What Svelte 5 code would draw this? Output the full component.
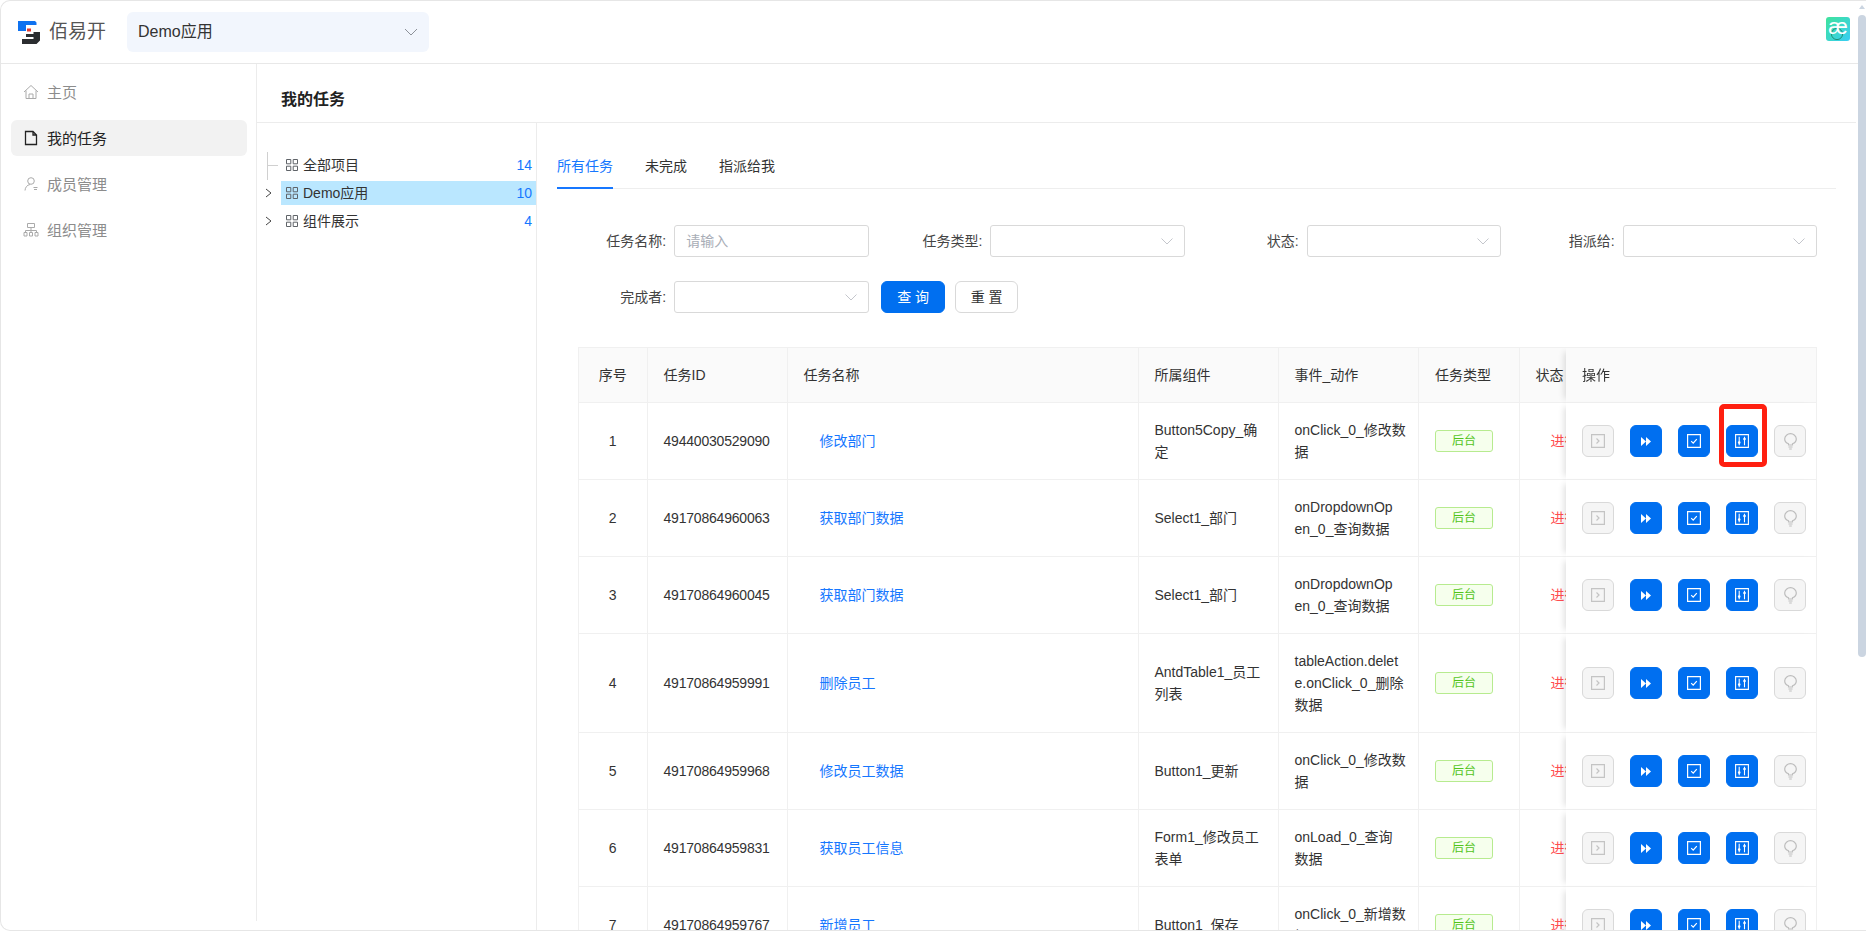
<script>
	const nav = [
		{ label: '主页', icon: 'home' },
		{ label: '我的任务', icon: 'file', active: true },
		{ label: '成员管理', icon: 'user' },
		{ label: '组织管理', icon: 'org' }
	];

	const tree = [
		{ label: '全部项目', count: 14, leaf: true },
		{ label: 'Demo应用', count: 10, selected: true },
		{ label: '组件展示', count: 4 }
	];

	const tabs = ['所有任务', '未完成', '指派给我'];

	// line breaks follow the narrow columns of the table
	const rows = [
		{ id: '49440030529090', name: '修改部门', comp: 'Button5Copy_确\n定', action: 'onClick_0_修改数\n据' },
		{ id: '49170864960063', name: '获取部门数据', comp: 'Select1_部门', action: 'onDropdownOp\nen_0_查询数据' },
		{ id: '49170864960045', name: '获取部门数据', comp: 'Select1_部门', action: 'onDropdownOp\nen_0_查询数据' },
		{ id: '49170864959991', name: '删除员工', comp: 'AntdTable1_员工\n列表', action: 'tableAction.delet\ne.onClick_0_删除\n数据' },
		{ id: '49170864959968', name: '修改员工数据', comp: 'Button1_更新', action: 'onClick_0_修改数\n据' },
		{ id: '49170864959831', name: '获取员工信息', comp: 'Form1_修改员工\n表单', action: 'onLoad_0_查询\n数据' },
		{ id: '49170864959767', name: '新增员工', comp: 'Button1_保存', action: 'onClick_0_新增数\n据' }
	];
</script>

<div class="frame">
	<header class="topbar">
		<div class="brand">
			<svg class="logo" width="22" height="23" viewBox="0 0 22 23">
				<path d="M0 0h17l1.500 1.500V4H8v6H0z" fill="#0f72f0" />
				<path d="M9 7.500h4v3H9z" fill="#e0392f" />
				<path d="M8 13h8v3H8z" fill="#2b2d30" />
				<path d="M15.500 11H22v8.500L18.500 23H4v-5h11.500z" fill="#2b2d30" />
			</svg>
			<span>佰易开</span>
		</div>
		<div class="app-select">
			<span>Demo应用</span>
			<svg width="14" height="8" viewBox="0 0 14 8"><path d="M1 1l6 6 6-6" fill="none" stroke="#8d9199" /></svg>
		</div>
		<div class="avatar">
			<svg width="24" height="24" viewBox="0 0 24 24">
				<circle cx="11" cy="17" r="5.600" fill="none" stroke="#1f8f78" stroke-width="1" />
			</svg>
			<span>æ</span>
		</div>
	</header>

	<div class="body">
		<aside class="sidebar">
			{#each nav as item}
				<div class="nav-item" class:active={item.active}>
					<svg width="16" height="16" viewBox="0 0 16 16" fill="none" stroke="currentColor">
						{#if item.icon === 'home'}
							<path d="M1 8l7-6.500L15 8M3 6.500v8h10v-8M6 14.500V10h4v4.500" />
						{:else if item.icon === 'file'}
							<path d="M2.500 1.500h7.500l3.500 3.500v9.500h-11zM10 1.500V5h3.500" stroke-width="1.300" />
						{:else if item.icon === 'user'}
							<circle cx="8" cy="5" r="3.300" />
							<path d="M2 14.500c.2-3 2-5.500 5-6M10.500 11.500h4M11 13.500h3" />
						{:else}
							<path d="M4.500 1.500h7v4h-7zM8 5.500v5M2.500 10.500v-2h11v2M1 10.500h3v3.500H1zM6.500 10.500h3v3.500h-3zM12 10.500h3v3.500h-3z" />
						{/if}
					</svg>
					<span>{item.label}</span>
				</div>
			{/each}
		</aside>

		<main class="main">
			<h1 class="title">我的任务</h1>
			<div class="split">
				<section class="tree">
					{#each tree as node}
						<div class="tree-row">
							<span class="switcher">
								{#if node.leaf}
									<i class="leaf-line"></i>
								{:else}
									<svg width="8" height="10" viewBox="0 0 8 10"><path d="M1 1l5 4-5 4" fill="none" stroke="#444" /></svg>
								{/if}
							</span>
							<div class="tree-node" class:selected={node.selected}>
								<svg width="12" height="12" viewBox="0 0 12 12" fill="none" stroke="#5f6368">
									<path d="M.5.500h4.300v4.300H.5zM7.200.500h4.300v4.300H7.200zM.5 7.200h4.300v4.300H.5zM7.200 7.200h4.300v4.300H7.200z" />
								</svg>
								<span class="tree-label">{node.label}</span>
								<span class="tree-count">{node.count}</span>
							</div>
						</div>
					{/each}
				</section>

				<section class="content">
					<nav class="tabs">
						{#each tabs as tab, i}
							<span class="tab" class:on={i === 0}>{tab}</span>
						{/each}
					</nav>

					<div class="filters">
						<div class="field">
							<label>任务名称:</label>
							<div class="control"><span class="placeholder">请输入</span></div>
						</div>
						{#each ['任务类型', '状态', '指派给', '完成者'] as f}
							<div class="field">
								<label>{f}:</label>
								<div class="control">
									<svg width="12" height="7" viewBox="0 0 12 7"><path d="M.5.500L6 6 11.500.500" fill="none" stroke="#c4c6cc" /></svg>
								</div>
							</div>
						{/each}
						<div class="form-btns">
							<button class="primary">查 询</button>
							<button>重 置</button>
						</div>
					</div>

					<div class="table-wrap">
						<table>
							<colgroup>
								<col style="width:68.500px" />
								<col style="width:140px" />
								<col style="width:351px" />
								<col style="width:140px" />
								<col style="width:140.500px" />
								<col style="width:100.500px" />
								<col style="width:104px" />
								<col style="width:251px" />
							</colgroup>
							<thead>
								<tr>
									<th class="center">序号</th>
									<th>任务ID</th>
									<th>任务名称</th>
									<th>所属组件</th>
									<th>事件_动作</th>
									<th>任务类型</th>
									<th>状态</th>
									<th class="fixed">操作</th>
								</tr>
							</thead>
							<tbody>
								{#each rows as row, i}
									<tr>
										<td class="center">{i + 1}</td>
										<td class="num">{row.id}</td>
										<td class="name"><span>{row.name}</span></td>
										<td class="lines">{row.comp}</td>
										<td class="lines">{row.action}</td>
										<td><span class="tag">后台</span></td>
										<td class="status">进行中</td>
										<td class="fixed">
											<div class="ops">
												<button class="op" aria-label="run">
													<svg width="14" height="14" viewBox="0 0 14 14" fill="none" stroke="#c4c4c4" stroke-width="1.200">
														<path d="M.6.600h12.800v12.800H.6zM5.500 4.500L8 7l-2.500 2.500" />
													</svg>
												</button>
												<button class="op blue" aria-label="skip">
													<svg width="10" height="9" viewBox="0 0 10 9" fill="#fff">
														<path d="M0 0l5 4.500L0 9zM5 0l5 4.500L5 9z" />
													</svg>
												</button>
												<button class="op blue" aria-label="finish">
													<svg width="14" height="14" viewBox="0 0 14 14" fill="none" stroke="#fff" stroke-width="1.200">
														<path d="M.6.600h12.800v12.800H.6zM4.200 7.200l2 2L9.800 5.200" />
													</svg>
												</button>
												<button class="op blue" aria-label="adjust">
													<svg width="14" height="14" viewBox="0 0 14 14" fill="none" stroke="#fff" stroke-width="1.100">
														<path d="M.6.600h12.800v12.800H.6zM4.200 2.800v8.400M9.500 2.800v8.400" />
														<circle cx="4.200" cy="8.600" r="1.300" fill="#fff" stroke="none" />
														<circle cx="9.500" cy="5" r="1.300" fill="#fff" stroke="none" />
													</svg>
												</button>
												<button class="op" aria-label="tip">
													<svg width="13" height="17" viewBox="0 0 13 17" fill="none" stroke="#bdbdbd" stroke-width="1.200">
														<path d="M4.500 12v-1.200C2.300 9.800.7 8.200.7 5.900.7 2.900 3.500.7 6.500.7s5.800 2.200 5.800 5.200c0 2.300-1.600 3.900-3.800 4.900V12zM4.500 14h4M5.200 16h2.600" />
													</svg>
												</button>
												{#if i === 0}
													<i class="marker"></i>
												{/if}
											</div>
										</td>
									</tr>
								{/each}
							</tbody>
						</table>
					</div>
				</section>
			</div>
		</main>
	</div>

	<div class="scrollbar">
		<i class="arrow"></i>
		<i class="thumb"></i>
	</div>
</div>

<style>
	:global(body) {
		margin: 0;
		background: #fff;
		overflow: hidden;
	}

	.frame {
		position: relative;
		box-sizing: border-box;
		height: 931px;
		overflow: hidden;
		border: 1px solid #e6e6e6;
		border-width: 1px 0 1px 1px;
		border-radius: 10px 0 0 10px;
		font-family: 'Liberation Sans', 'Noto Sans CJK SC', sans-serif;
		font-size: 14px;
		line-height: 22px;
		color: #333;
	}

	.topbar {
		display: flex;
		align-items: center;
		box-sizing: border-box;
		height: 63px;
		padding: 0 16px 0 17px;
		border-bottom: 1px solid #e8e8e8;
	}
	.brand {
		display: flex;
		align-items: center;
		gap: 9px;
		width: 109px;
		font-size: 19px;
		color: #555;
	}
	.app-select {
		display: flex;
		align-items: center;
		justify-content: space-between;
		box-sizing: border-box;
		width: 302px;
		height: 40px;
		padding: 0 11px 0 11px;
		border-radius: 6px;
		background: #f2f6fd;
		font-size: 16px;
		color: #333;
	}
	.avatar {
		position: relative;
		width: 24px;
		height: 24px;
		margin-left: auto;
		margin-top: -7px;
		border-radius: 3px;
		background: linear-gradient(135deg, #3fe39b, #38cdf5);
		color: #fff;
		font-size: 22px;
		line-height: 20px;
		text-align: center;
	}
	.avatar svg {
		position: absolute;
		left: 0;
		top: 0;
	}
	.avatar span {
		position: relative;
	}

	.body {
		display: flex;
		align-items: flex-start;
	}

	.sidebar {
		box-sizing: border-box;
		flex: none;
		width: 256px;
		height: 857px;
		padding: 10px 9px 0 10px;
		border-right: 1px solid #ececec;
	}
	.nav-item {
		display: flex;
		align-items: center;
		gap: 8px;
		height: 36px;
		margin-bottom: 10px;
		padding-left: 12px;
		border-radius: 6px;
		font-size: 15px;
		color: #8c8c8c;
	}
	.nav-item span {
		margin-top: 2px;
	}
	.nav-item svg {
		color: #aaa;
	}
	.nav-item.active {
		background: #f2f2f2;
		color: #222;
	}
	.nav-item.active svg {
		color: #222;
	}

	.main {
		flex: 1;
		min-width: 0;
		margin-right: 10px;
	}
	.title {
		box-sizing: border-box;
		height: 59px;
		margin: 0;
		padding: 25px 0 0 24px;
		border-bottom: 1px solid #ececec;
		font-size: 16px;
		font-weight: 700;
		line-height: 22px;
		color: #222;
	}

	.split {
		display: flex;
		height: 809px;
	}
	.tree {
		box-sizing: border-box;
		flex: none;
		width: 280px;
		padding-top: 30px;
		border-right: 1px solid #ececec;
	}
	.tree-row {
		display: flex;
		align-items: center;
		height: 24px;
		margin-bottom: 4px;
		line-height: 24px;
	}
	.switcher {
		position: relative;
		display: flex;
		align-items: center;
		flex: none;
		width: 24px;
		height: 24px;
		padding-left: 8px;
		box-sizing: border-box;
	}
	.leaf-line {
		position: absolute;
		left: 10px;
		top: -1px;
		width: 10px;
		height: 13px;
		border-left: 1px solid #d0d0d0;
		border-bottom: 1px solid #d0d0d0;
	}
	.leaf-line::after {
		content: '';
		position: absolute;
		left: -1px;
		top: 13px;
		height: 15px;
		border-left: 1px solid #d0d0d0;
	}
	.tree-node {
		display: flex;
		align-items: center;
		flex: 1;
		gap: 5px;
		height: 24px;
		padding: 0 4px 0 5px;
	}
	.tree-node.selected {
		background: #bae7ff;
	}
	.tree-label {
		flex: 1;
	}
	.tree-count {
		color: #1677ff;
	}

	.content {
		flex: 1;
		min-width: 0;
		padding: 0 20px;
	}
	.tabs {
		display: flex;
		gap: 32px;
		box-sizing: border-box;
		height: 66px;
		padding-top: 32px;
		border-bottom: 1px solid #eee;
	}
	.tab {
		box-sizing: border-box;
		height: 34px;
	}
	.tab.on {
		border-bottom: 2px solid #1677ff;
		color: #1677ff;
	}

	.filters {
		display: grid;
		grid-template-columns: repeat(4, 316.200px);
		row-gap: 24px;
		margin: 36px 0 0 -4.500px;
	}
	.field {
		display: grid;
		grid-template-columns: 1fr 194.500px;
		align-items: center;
		column-gap: 8px;
	}
	.field label {
		text-align: right;
		color: #444;
	}
	.control {
		display: flex;
		align-items: center;
		justify-content: flex-end;
		box-sizing: border-box;
		height: 32px;
		padding: 0 11px;
		border: 1px solid #d9d9d9;
		border-radius: 3px;
		background: #fff;
	}
	.placeholder {
		margin-right: auto;
		color: #a8adb6;
	}
	.form-btns {
		display: flex;
		gap: 10px;
		padding-left: 12.500px;
	}
	.form-btns button {
		box-sizing: border-box;
		width: 63px;
		height: 32px;
		padding: 0;
		border: 1px solid #d9d9d9;
		border-radius: 6px;
		background: #fff;
		font: inherit;
		color: #333;
	}
	.form-btns button.primary {
		width: 64px;
		border-color: #006ff0;
		background: #006ff0;
		color: #fff;
	}

	.table-wrap {
		overflow: hidden;
		margin: 34px 19px 0 21px;
		border-top: 1px solid #f0f0f0;
		border-left: 1px solid #f0f0f0;
	}
	table {
		table-layout: fixed;
		width: 1295px;
		border-collapse: separate;
		border-spacing: 0;
	}
	th,
	td {
		box-sizing: border-box;
		padding: 16px;
		border-right: 1px solid #f0f0f0;
		border-bottom: 1px solid #f0f0f0;
		background: #fff;
		font-weight: 400;
		text-align: left;
		vertical-align: middle;
		color: #333;
	}
	th {
		background: #fafafa;
	}
	.center {
		text-align: center;
	}
	.num {
		padding-right: 0;
		letter-spacing: -0.2px;
		white-space: nowrap;
	}
	.name span {
		padding-left: 16px;
		color: #1677ff;
	}
	.lines {
		padding-right: 0;
		white-space: pre;
	}
	.tag {
		display: block;
		box-sizing: border-box;
		width: 58px;
		height: 22px;
		border: 1px solid #b7eb8f;
		border-radius: 3px;
		background: #f6ffed;
		font-size: 12px;
		line-height: 20px;
		text-align: center;
		color: #52c41a;
	}
	.status {
		padding-left: 31px;
		border-right: 0;
		white-space: nowrap;
		color: #ff4d4f;
	}
	.fixed {
		position: sticky;
		right: 0;
		border-right: 1px solid #f0f0f0;
		box-shadow: -6px 0 6px -4px rgba(0, 0, 0, 0.12);
	}
	.ops {
		position: relative;
		display: flex;
		gap: 16px;
	}
	.op {
		display: flex;
		align-items: center;
		justify-content: center;
		flex: none;
		box-sizing: border-box;
		width: 32px;
		height: 32px;
		padding: 0;
		border: 1px solid #d9d9d9;
		border-radius: 6px;
		background: #f5f5f5;
	}
	.op.blue {
		border-color: #006ff0;
		background: #006ff0;
	}
	.marker {
		position: absolute;
		left: 137px;
		top: -21px;
		box-sizing: border-box;
		width: 48px;
		height: 63px;
		border: 5px solid #ff1f10;
		border-radius: 5px;
	}

	.scrollbar {
		position: absolute;
		top: 0;
		right: 0;
		bottom: 0;
		width: 8px;
		background: #fff;
	}
	.arrow {
		position: absolute;
		left: 1px;
		top: 4px;
		border-left: 3px solid transparent;
		border-right: 3px solid transparent;
		border-bottom: 4px solid #cbd5e1;
	}
	.thumb {
		position: absolute;
		left: 0;
		top: 14px;
		width: 8px;
		height: 642px;
		border-radius: 4px;
		background: #cbd5e1;
	}
</style>
